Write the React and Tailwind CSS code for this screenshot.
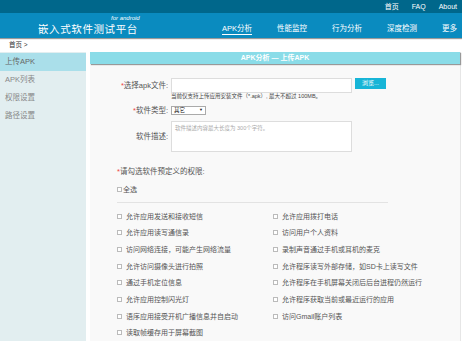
const leftPerms = [
  '允许应用发送和接收短信',
  '允许应用读写通信录',
  '访问网络连接，可能产生网络流量',
  '允许访问摄像头进行拍照',
  '通过手机定位信息',
  '允许应用控制闪光灯',
  '语序应用接受开机广播信息并自启动',
  '读取帧缓存用于屏幕截图',
]

const rightPerms = [
  '允许应用拨打电话',
  '访问用户个人资料',
  '录制声音通过手机或耳机的麦克',
  '允许程序读写外部存储，如SD卡上读写文件',
  '允许程序在手机屏幕关闭后后台进程仍然运行',
  '允许程序获取当前或最近运行的应用',
  '访问Gmail账户列表',
]

const navItems = ['APK分析', '性能监控', '行为分析', '深度检测', '更多']
const sideItems = ['上传APK', 'APK列表', '权限设置', '路径设置']

function Check({ label }) {
  return (
    <div className="flex items-center h-[16.67px] text-[7px] text-[#555] leading-none">
      <span className="w-[5px] h-[5px] border border-[#bbb] bg-white shrink-0" />
      <span className="ml-[4px] whitespace-nowrap">{label}</span>
    </div>
  )
}

function Label({ children, required }) {
  return (
    <div className="w-[78px] shrink-0 text-right text-[7.5px] text-[#555] leading-[9px] whitespace-nowrap">
      {required && <span className="text-[#e44]">*</span>}
      {children}
    </div>
  )
}

export default function App() {
  const rows = []
  for (let i = 0; i < leftPerms.length; i++) {
    rows.push(<Check key={'l' + i} label={leftPerms[i]} />)
    rows.push(rightPerms[i] ? <Check key={'r' + i} label={rightPerms[i]} /> : <div key={'r' + i} />)
  }

  return (
    <div className="w-[462px] h-[341px] overflow-hidden bg-white font-['Liberation_Sans','Noto_Sans_CJK_SC',sans-serif]">
      {/* top links */}
      <div className="h-[13px] bg-[#00678b] flex items-center justify-end gap-[13px] pr-[5px] text-[7px] text-white leading-none">
        <span>首页</span>
        <span>FAQ</span>
        <span>About</span>
      </div>

      {/* main nav */}
      <div className="h-[25px] bg-[#0a8bbf] flex shadow-[0_1px_1px_#9a9a9a] relative">
        <div className="ml-[38px] flex flex-col items-start pt-[2px]">
          <span className="ml-[73px] text-[6px] italic text-white leading-[6px] whitespace-nowrap">for android</span>
          <span className="mt-[3px] text-[10.5px] tracking-[0.6px] text-white leading-[11px] whitespace-nowrap">嵌入式软件测试平台</span>
        </div>
        <div className="ml-auto flex gap-[25px] pr-[5px] pt-[11px] text-[7.5px] text-white">
          {navItems.map((n, i) => (
            <span key={n} className={'leading-[9px] whitespace-nowrap ' + (i === 0 ? 'border-b border-white pb-[0.5px] h-[11px]' : '')}>
              {n}
            </span>
          ))}
        </div>
      </div>

      {/* breadcrumb */}
      <div className="h-[14px] flex items-center pl-[9px] text-[6.5px] text-[#333] leading-none">首页 &gt;</div>

      <div className="flex h-[289px]">
        {/* sidebar */}
        <div className="w-[86px] bg-[#e2eef0] pt-[1px]">
          {sideItems.map((s, i) => (
            <div
              key={s}
              className={'h-[18px] flex items-center pl-[5px] text-[7.5px] leading-none ' + (i === 0 ? 'bg-[#aadfea] text-[#666]' : 'text-[#888]')}
            >
              {s}
            </div>
          ))}
        </div>

        {/* main panel */}
        <div className="ml-[4px] w-[371px] flex flex-col bg-[#f9f9f9] border-r border-[#e6e6e6]">
          <div className="h-[16px] bg-[#8adce8] flex items-center justify-center text-[7px] font-bold text-white shadow-[1px_1px_1px_#999] leading-none">
            APK分析 — 上传APK
          </div>

          <div className="pt-[14px]">
            <div className="flex items-center">
              <Label required>选择apk文件:</Label>
              <div className="ml-[3px] w-[181px] h-[15px] bg-white border border-[#ddd]" />
              <div className="ml-[3px] self-start w-[31px] h-[11px] bg-[#17b5d7] text-white text-[6px] flex items-center justify-center leading-none">浏览...</div>
            </div>
            <div className="pl-[81px] text-[5.5px] text-[#444] leading-[6px] whitespace-nowrap">
              当前仅支持上传应用安装文件（*.apk）, 最大不超过 100MB。
            </div>

            <div className="flex items-center mt-[7px]">
              <Label required>软件类型:</Label>
              <div className="ml-[3px] w-[35px] h-[9px] bg-white border border-[#aaa] flex items-center justify-between px-[2px] text-[5.5px] text-[#222] leading-none">
                <span>其它</span>
                <span className="text-[4px]">▼</span>
              </div>
            </div>

            <div className="flex items-center mt-[6px]">
              <Label>软件描述:</Label>
              <div className="ml-[3px] w-[181px] h-[31px] bg-white border border-[#ddd] px-[3px] pt-[3px] text-[5.5px] text-[#aaa] leading-[6px] whitespace-nowrap">
                软件描述内容最大长度为 300个字符。
              </div>
            </div>

            <div className="pl-[27px] mt-[15px] text-[7.5px] text-[#555] leading-[9px]">
              <span className="text-[#e44]">*</span>请勾选软件预定义的权限:
            </div>

            <div className="pl-[27px] mt-[9px] flex items-center h-[9px] text-[7px] text-[#555] leading-none">
              <span className="w-[5px] h-[5px] border border-[#bbb] bg-white" />
              <span className="ml-[1px]">全选</span>
            </div>

            <div className="ml-[27px] mt-[8px] w-[271px] h-px bg-[#e3e3e3]" />

            <div className="pl-[27px] mt-[5px] grid grid-cols-[156px_1fr]">{rows}</div>
          </div>
        </div>
      </div>
    </div>
  )
}
